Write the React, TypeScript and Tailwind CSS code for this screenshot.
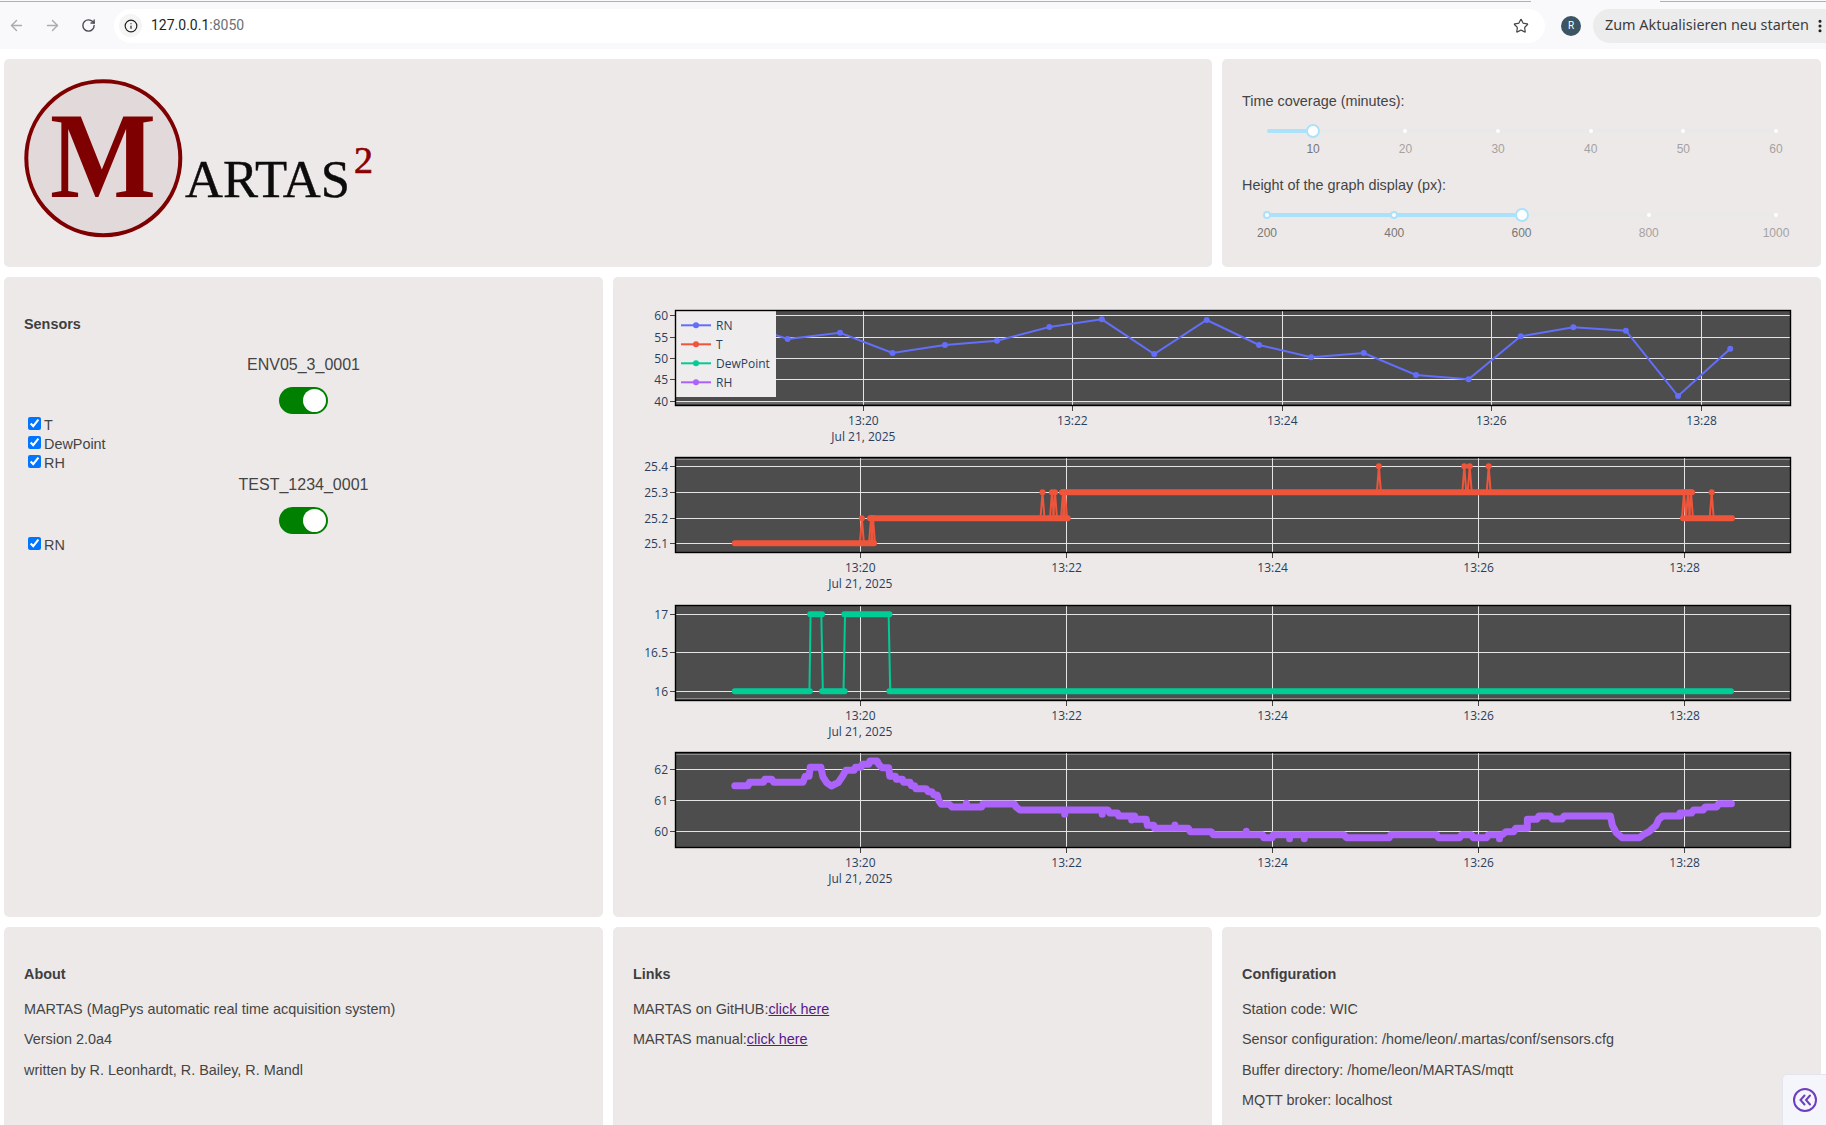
import { ArrowLeft, ArrowRight, EllipsisVertical, Info, RotateCw, Star } from "lucide-react";

const RN = "#636efa";
const T = "#ef553b";
const DEW = "#00cc96";
const RH = "#ab63fa";

// px samples read off the chart, left and right half have their own scale
const lx = (z: number) => 7 + z / 2.613;
const rx = (z: number) => 607 + z / 2.587;
const pts = (list: number[][]) => list.map((p) => p.join(",")).join(" ");
const snap = (v: number) => Math.floor(v) + 0.5;

const TICKS_TOP = [250.4, 459.4, 669.2, 878.4, 1088.6];
const TICKS = [247.3, 453.6, 659.6, 865.6, 1071.6];
const LABELS = ["13:20", "13:22", "13:24", "13:26", "13:28"];

type PlotProps = {
  height: number;
  xticks: number[];
  yticks: { y: number; label: string }[];
  edge?: number;
  children?: React.ReactNode;
};

const Plot = ({ height, xticks, yticks, edge, children }: PlotProps) => (
  <svg width="1208" height={height} className="block shrink-0" style={{ fontFamily: "'Open Sans', sans-serif" }}>
    <rect x="62.5" y="10.5" width="1115" height="95" fill="#4d4d4d" />
    {edge !== undefined && <line x1="63" x2="1177" y1={edge} y2={edge} stroke="#8a8a8a" strokeWidth="1" />}
    {yticks.map((t) => (
      <g key={t.label}>
        <line x1="62" x2="1177" y1={snap(t.y)} y2={snap(t.y)} stroke="#e4e4e4" strokeWidth="1" />
        <line x1="57" x2="62" y1={snap(t.y)} y2={snap(t.y)} stroke="#444" strokeWidth="1" />
        <text x="55" y={t.y + 4.5} textAnchor="end" fontSize="12" fill="#2a3f5f">
          {t.label}
        </text>
      </g>
    ))}
    {xticks.map((x, i) => (
      <g key={x}>
        <line x1={snap(x)} x2={snap(x)} y1="10" y2="105" stroke="#e4e4e4" strokeWidth="1" />
        <line x1={snap(x)} x2={snap(x)} y1="105" y2="111" stroke="#444" strokeWidth="1" />
        <text x={x} y="125" textAnchor="middle" fontSize="12" fill="#2a3f5f">
          {LABELS[i]}
        </text>
      </g>
    ))}
    <text x={xticks[0]} y="141" textAnchor="middle" fontSize="12" fill="#2a3f5f">
      Jul 21, 2025
    </text>
    {children}
    <rect x="62.5" y="10.5" width="1115" height="95" fill="none" stroke="#000" strokeWidth="1.4" />
  </svg>
);

const rnData = [
  [lx(301), 21.7], [lx(438), 39], [lx(575), 32.7], [lx(712), 53], [lx(849), 45], [lx(985), 40.7],
  [lx(1122), 27], [lx(1259), 19.3], [lx(1396), 54], [lx(1533), 20], [rx(101), 45], [rx(236), 57.3],
  [rx(372), 53], [rx(507), 75], [rx(643), 79.3], [rx(778), 36.3], [rx(914), 27.3], [rx(1050), 30.7],
  [rx(1185), 96], [rx(1320), 48.7],
];

const legendItems = [
  { name: "RN", color: RN, y: 25.3 },
  { name: "T", color: T, y: 44.3 },
  { name: "DewPoint", color: DEW, y: 63.3 },
  { name: "RH", color: RH, y: 82.3 },
];

const ChartRN = () => (
  <Plot
    height={147}
    xticks={TICKS_TOP}
    edge={103}
    yticks={[
      { y: 15.3, label: "60" },
      { y: 37.3, label: "55" },
      { y: 58.3, label: "50" },
      { y: 79.3, label: "45" },
      { y: 101.3, label: "40" },
    ]}
  >
    <polyline points={pts(rnData)} fill="none" stroke={RN} strokeWidth="2" />
    {rnData.slice(1).map(([x, y]) => (
      <circle key={x} cx={x} cy={y} r="3" fill={RN} />
    ))}
    <rect x="63" y="11" width="100" height="86" fill="#eeecec" />
    {legendItems.map((l) => (
      <g key={l.name}>
        <line x1="68" x2="98" y1={l.y} y2={l.y} stroke={l.color} strokeWidth="2" />
        <circle cx="83" cy={l.y} r="3" fill={l.color} />
        <text x="103" y={l.y + 4.5} fontSize="12" fill="#2a3f5f">
          {l.name}
        </text>
      </g>
    ))}
  </Plot>
);

const tv: Record<string, number> = { "25.1": 96.3, "25.2": 71.3, "25.3": 45.3, "25.4": 19.3 };
const tBars: [number, number, string][] = [
  [121.8, 261, "25.1"],
  [257, 443, "25.2"],
  [443, 454.7, "25.2"],
  [449, 1079, "25.3"],
  [1070, 1076.7, "25.2"],
  [1078, 1119, "25.2"],
];
const tSpikes: [number, string, string][] = [
  [248.9, "25.1", "25.2"],
  [258, "25.1", "25.2"],
  [260, "25.1", "25.2"],
  [429.5, "25.2", "25.3"],
  [439, "25.2", "25.3"],
  [442, "25.2", "25.3"],
  [450, "25.2", "25.3"],
  [452, "25.2", "25.3"],
  [765.9, "25.3", "25.4"],
  [851.3, "25.3", "25.4"],
  [856.7, "25.3", "25.4"],
  [875.7, "25.3", "25.4"],
  [1071, "25.2", "25.3"],
  [1075, "25.2", "25.3"],
  [1078, "25.2", "25.3"],
  [1098.7, "25.2", "25.3"],
];

const ChartT = () => (
  <Plot
    height={148}
    xticks={TICKS}
    edge={12.5}
    yticks={[
      { y: 19.3, label: "25.4" },
      { y: 45.3, label: "25.3" },
      { y: 71.3, label: "25.2" },
      { y: 96.3, label: "25.1" },
    ]}
  >
    {tSpikes.map(([x, base, top]) => (
      <g key={x}>
        <polyline
          points={pts([[x - 2, tv[base]], [x, tv[top]], [x + 2, tv[base]]])}
          fill="none"
          stroke={T}
          strokeWidth="2"
        />
        <circle cx={x} cy={tv[top]} r="3" fill={T} />
      </g>
    ))}
    {tBars.map(([a, b, v]) => (
      <line key={a} x1={a} x2={b} y1={tv[v]} y2={tv[v]} stroke={T} strokeWidth="6" strokeLinecap="round" />
    ))}
  </Plot>
);

const dewLine = [
  [lx(300), 96.3], [lx(495), 96.3], [lx(498), 19.3], [lx(526), 19.3], [lx(530), 96.3], [lx(584), 96.3],
  [lx(588), 19.3], [lx(702), 19.3], [lx(706), 96.3], [rx(1325), 96.3],
];
const dewBars = [
  [lx(300), lx(496), 96.3], [lx(497), lx(528), 19.3], [lx(528), lx(587), 96.3],
  [lx(586), lx(704), 19.3], [lx(704), rx(1322), 96.3],
];

const ChartDew = () => (
  <Plot
    height={147}
    xticks={TICKS}
    edge={103.5}
    yticks={[
      { y: 19.3, label: "17" },
      { y: 57.3, label: "16.5" },
      { y: 96.3, label: "16" },
    ]}
  >
    <polyline points={pts(dewLine)} fill="none" stroke={DEW} strokeWidth="2" />
    {dewBars.map(([a, b, y]) => (
      <line key={a} x1={a} x2={b} y1={y} y2={y} stroke={DEW} strokeWidth="6" strokeLinecap="round" />
    ))}
  </Plot>
);

// y as read in the 3x crop, 488 is the plot's top edge there
const ry = (z: number) => 10 + (z - 488) / 3;
const rhLeft = [
  [300, 589], [335, 589], [338, 579], [375, 579], [378, 570], [397, 570], [402, 579], [478, 579], [484, 561],
  [494, 561], [497, 534], [525, 534], [530, 562], [540, 580], [552, 590], [570, 580], [582, 560], [590, 543],
  [612, 543], [615, 534], [630, 534], [633, 525], [650, 525], [653, 515], [672, 515], [676, 525], [685, 535],
  [702, 535], [705, 561], [720, 561], [722, 570], [738, 570], [741, 579], [758, 579], [761, 589], [770, 589],
  [773, 598], [800, 598], [805, 607], [815, 607], [820, 617], [829, 617], [833, 634], [840, 645], [860, 645],
  [868, 653], [945, 653], [948, 644], [1030, 644], [1035, 653], [1045, 662], [1275, 662], [1280, 671],
  [1300, 671], [1303, 680], [1345, 680], [1347, 690], [1375, 690], [1378, 708], [1395, 708], [1397, 717],
  [1485, 717], [1490, 727], [1545, 727], [1550, 736], [1568, 736],
].map(([x, y]) => [lx(x), ry(y)]);
const rhRight = [
  [0, 736], [110, 736], [113, 745], [135, 745], [138, 736], [320, 736], [327, 745], [438, 745], [442, 736],
  [560, 736], [565, 745], [620, 745], [625, 736], [650, 736], [655, 745], [690, 745], [695, 736], [730, 736],
  [740, 727], [760, 727], [765, 717], [795, 717], [795, 690], [820, 690], [825, 680], [855, 680], [860, 689],
  [885, 689], [890, 680], [1010, 680], [1015, 708], [1025, 730], [1040, 745], [1085, 745], [1095, 736],
  [1110, 727], [1128, 708], [1135, 690], [1145, 680], [1190, 680], [1190, 671], [1220, 671], [1225, 662],
  [1250, 662], [1255, 653], [1285, 653], [1290, 643], [1323, 643],
].map(([x, y]) => [rx(x), ry(y)]);
const rhBlips = [
  [lx(905), ry(642)], [lx(1162), ry(675)], [lx(1260), ry(675)], [lx(1337), ry(692)], [lx(1450), ry(707)],
  [rx(68), ry(726)], [rx(180), ry(748)], [rx(218), ry(748)], [rx(723), ry(748)],
];

const ChartRH = () => (
  <Plot
    height={147}
    xticks={TICKS}
    edge={12.5}
    yticks={[
      { y: 27.6, label: "62" },
      { y: 58.6, label: "61" },
      { y: 89.6, label: "60" },
    ]}
  >
    <polyline
      points={pts([...rhLeft, ...rhRight])}
      fill="none"
      stroke={RH}
      strokeWidth="7"
      strokeLinecap="round"
      strokeLinejoin="round"
    />
    {rhBlips.map(([x, y]) => (
      <circle key={x} cx={x} cy={y} r="3.5" fill={RH} />
    ))}
  </Plot>
);

const Logo = () => (
  <svg width="400" height="190" className="block">
    <circle cx="99.3" cy="89.3" r="77" fill="#e2dada" stroke="#7f0000" strokeWidth="4" />
    <text
      x="46"
      y="127.5"
      fontSize="122"
      fontWeight="700"
      textLength="106"
      lengthAdjust="spacingAndGlyphs"
      fill="#7f0000"
      fontFamily="'Liberation Serif', serif"
    >
      M
    </text>
    <text
      x="181"
      y="127.5"
      fontSize="52"
      textLength="165"
      lengthAdjust="spacingAndGlyphs"
      fill="#0c0c0c"
      stroke="#0c0c0c"
      strokeWidth="0.4"
      fontFamily="'Liberation Serif', serif"
    >
      ARTAS
    </text>
    <text
      x="350"
      y="104"
      fontSize="38"
      fill="#8b0000"
      stroke="#8b0000"
      strokeWidth="0.7"
      fontFamily="'Liberation Serif', serif"
    >
      2
    </text>
  </svg>
);

type SliderProps = {
  marks: { label: string; pct: number }[];
  fill: number;
  active: number;
};

const Slider = ({ marks, fill, active }: SliderProps) => (
  <div className="relative mx-[25px] h-[4px] rounded-full bg-[#e9e9e9]">
    <div className="absolute left-0 top-0 h-[4px] rounded-full bg-[#abe2fb]" style={{ width: `${fill}%` }} />
    {marks.map((m, i) => (
      <div key={m.label}>
        {i < active ? (
          <span
            className="absolute top-[-2px] h-[8px] w-[8px] -translate-x-1/2 rounded-full border-2 border-[#abe2fb] bg-white"
            style={{ left: `${m.pct}%` }}
          />
        ) : i === active ? (
          <span
            className="absolute top-[-5px] h-[14px] w-[14px] -translate-x-1/2 rounded-full border-2 border-[#abe2fb] bg-white"
            style={{ left: `${m.pct}%` }}
          />
        ) : (
          <span
            className="absolute top-0 h-[4px] w-[4px] -translate-x-1/2 rounded-full bg-white"
            style={{ left: `${m.pct}%` }}
          />
        )}
        <span
          className={`absolute top-[13px] -translate-x-1/2 text-[12px] leading-[14px] ${
            i <= active ? "text-[#777]" : "text-[#a5a2a2]"
          }`}
          style={{ left: `${m.pct}%` }}
        >
          {m.label}
        </span>
      </div>
    ))}
  </div>
);

const Toggle = () => (
  <div className="mx-auto flex h-[27px] w-[49px] items-center justify-end rounded-full bg-[#008000] pr-[2px]">
    <span className="h-[23px] w-[23px] rounded-full bg-white" />
  </div>
);

const Check = ({ label }: { label: string }) => (
  <label className="flex h-[19px] items-start pl-[24px] text-[14.4px] leading-[21px]">
    <input type="checkbox" defaultChecked className="m-0 mt-[2px] mr-[3px] h-[13px] w-[13px]" />
    {label}
  </label>
);

const SensorName = ({ name }: { name: string }) => (
  <div className="text-center text-[16px] leading-[18px]">{name}</div>
);

const Panel = ({ className, children }: { className?: string; children: React.ReactNode }) => (
  <div className={`rounded-[5px] bg-[#ede9e8] ${className ?? ""}`}>{children}</div>
);

const InfoBlock = ({ title, children }: { title: string; children: React.ReactNode }) => (
  <Panel className="h-[220px] px-[20px] pt-[39px]">
    <div className="mb-[19px] text-[14.4px] font-bold leading-[16px] text-[#3f3f3f]">{title}</div>
    <div className="flex flex-col gap-[14.3px] text-[14.4px] leading-[16px]">{children}</div>
  </Panel>
);

const ClickHere = () => (
  <a href="#" className="text-[#551a8b] underline">
    click here
  </a>
);

export default function App() {
  return (
    <div
      className="relative h-[1125px] w-[1826px] overflow-hidden bg-white text-[#444]"
      style={{ fontFamily: "'Liberation Sans', Arial, sans-serif" }}
    >
      {/* browser bar */}
      <div className="flex h-[2px] bg-[#f9f9fb]">
        <div className="w-[1531px] border-b border-[#b0b0b0]" />
        <div className="w-[129px]" />
        <div className="flex-1 border-b border-[#b0b0b0]" />
      </div>
      <div className="flex h-[47px] items-center bg-[#f9f9fb]" style={{ fontFamily: "Roboto, sans-serif" }}>
        <div className="-ml-[2px] flex shrink-0 items-center text-[#a9abae]">
          <div className="flex w-[36px] justify-center">
            <ArrowLeft size={17} />
          </div>
          <div className="flex w-[36px] justify-center">
            <ArrowRight size={17} />
          </div>
          <div className="flex w-[36px] justify-center text-[#474a4e]">
            <RotateCw size={15} strokeWidth={2.2} />
          </div>
        </div>
        <div className="ml-[8px] flex h-[34px] w-[1431px] shrink-0 items-center rounded-full bg-white pl-[5px] pr-[16px]">
          <div className="flex h-[23px] w-[23px] items-center justify-center rounded-full bg-[#f5f5f6] text-[#1f1f1f]">
            <Info size={14} strokeWidth={2} />
          </div>
          <span className="ml-[9px] text-[14px] text-[#1f1f1f]">
            127.0.0.1<span className="text-[#6b6f76]">:8050</span>
          </span>
          <Star size={16} strokeWidth={1.8} className="ml-auto text-[#474747]" />
        </div>
        <div className="ml-[16px] flex h-[20px] w-[20px] shrink-0 items-center justify-center rounded-full bg-[#3b5563] text-[10px] text-white">
          R
        </div>
        <div className="ml-[12px] flex h-[34px] w-[260px] shrink-0 items-center rounded-full bg-[#ececed] pl-[12px] text-[#3c3c3c]">
          <span className="pb-[2px] text-[14.4px]" style={{ fontFamily: "'Noto Sans', sans-serif" }}>
            Zum Aktualisieren neu starten
          </span>
          <EllipsisVertical size={16} className="ml-[3px] text-[#1f1f1f]" strokeWidth={2.6} />
        </div>
      </div>

      {/* dashboard */}
      <div className="grid grid-cols-3 gap-[10px] pl-[4px] pr-[5px] pt-[10px]">
        <Panel className="col-span-2 h-[208px] pt-[10px]">
          <Logo />
        </Panel>
        <Panel className="h-[208px] px-[20px] pt-[34px]">
          <div className="text-[14.4px] leading-[16px]">Time coverage (minutes):</div>
          <div className="mt-[20px]">
            <Slider
              active={0}
              fill={9.05}
              marks={[
                { label: "10", pct: 9.05 },
                { label: "20", pct: 27.2 },
                { label: "30", pct: 45.4 },
                { label: "40", pct: 63.6 },
                { label: "50", pct: 81.8 },
                { label: "60", pct: 100 },
              ]}
            />
          </div>
          <div className="mt-[44px] text-[14.4px] leading-[16px]">Height of the graph display (px):</div>
          <div className="mt-[20px]">
            <Slider
              active={2}
              fill={50}
              marks={[
                { label: "200", pct: 0 },
                { label: "400", pct: 25 },
                { label: "600", pct: 50 },
                { label: "800", pct: 75 },
                { label: "1000", pct: 100 },
              ]}
            />
          </div>
        </Panel>

        <Panel className="h-[640px] pt-[39px]">
          <div className="ml-[20px] text-[14.4px] font-bold leading-[16px] text-[#3f3f3f]">Sensors</div>
          <div className="mt-[24px]">
            <SensorName name="ENV05_3_0001" />
            <div className="mb-[1px] mt-[13px]">
              <Toggle />
            </div>
            <Check label="T" />
            <Check label="DewPoint" />
            <Check label="RH" />
          </div>
          <div className="mt-[4px]">
            <SensorName name="TEST_1234_0001" />
            <div className="mb-[1px] mt-[13px]">
              <Toggle />
            </div>
            <Check label="RN" />
          </div>
        </Panel>
        <Panel className="col-span-2 flex h-[640px] flex-col pt-[23px]">
          <ChartRN />
          <ChartT />
          <ChartDew />
          <ChartRH />
        </Panel>

        <InfoBlock title="About">
          <p>MARTAS (MagPys automatic real time acquisition system)</p>
          <p>Version 2.0a4</p>
          <p>written by R. Leonhardt, R. Bailey, R. Mandl</p>
        </InfoBlock>
        <InfoBlock title="Links">
          <p>
            MARTAS on GitHUB:
            <ClickHere />
          </p>
          <p>
            MARTAS manual:
            <ClickHere />
          </p>
        </InfoBlock>
        <InfoBlock title="Configuration">
          <p>Station code: WIC</p>
          <p>Sensor configuration: /home/leon/.martas/conf/sensors.cfg</p>
          <p>Buffer directory: /home/leon/MARTAS/mqtt</p>
          <p>MQTT broker: localhost</p>
        </InfoBlock>
      </div>

      {/* dev tools toggle, sits over the page corner */}
      <div className="absolute bottom-0 right-0 flex h-[51px] w-[44px] items-center justify-center rounded-tl-[5px] border-l border-t border-[#e4e5ec] bg-[#f5f6fb]">
        <svg width="26" height="26" viewBox="0 0 26 26" fill="none" stroke="#6d3fc0">
          <circle cx="13" cy="13" r="11" strokeWidth="2" />
          <path d="M12.5 8.5 8.5 13l4 4.5M18 8.5 14 13l4 4.5" strokeWidth="2" strokeLinecap="round" />
        </svg>
      </div>
    </div>
  );
}
